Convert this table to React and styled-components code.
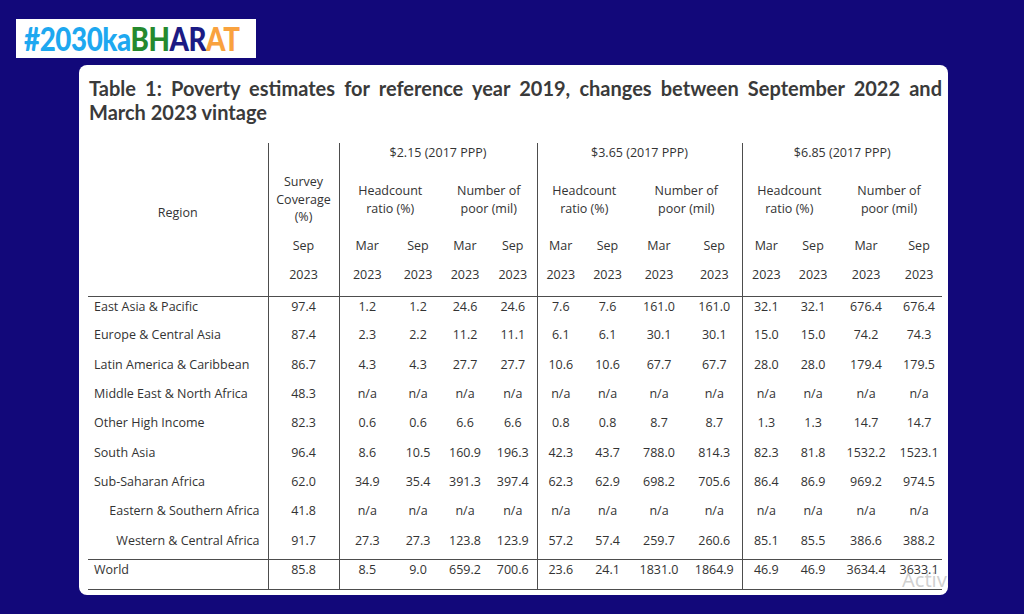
import React from "react";
import styled, { createGlobalStyle } from "styled-components";

const Global = createGlobalStyle`
  html, body { margin: 0; padding: 0; }
  body {
    background: #12087a;
    width: 1024px;
    height: 614px;
    overflow: hidden;
    font-family: "Open Sans", "Liberation Sans", sans-serif;
  }
`;

const Page = styled.div`
  display: flex;
  flex-direction: column;
  align-items: flex-start;
  padding: 19px 0 0 16px;
`;

const Logo = styled.div`
  background: #ffffff;
  width: 240px;
  height: 39px;
  display: flex;
  align-items: center;
  padding-left: 8px;
  box-sizing: border-box;
  overflow: hidden;
`;

const LogoText = styled.div`
  font-family: "Lato", "Liberation Sans", sans-serif;
  font-weight: 900;
  font-size: 33px;
  letter-spacing: -0.5px;
  line-height: 1;
  white-space: nowrap;
  transform: scaleX(0.84);
  transform-origin: left center;
`;

const LogoPart = styled.span`
  color: ${(p) => p.$c};
`;

const Card = styled.div`
  position: relative;
  margin: 7px 0 0 63px;
  width: 869px;
  height: 530px;
  background: #ffffff;
  border-radius: 8px;
  overflow: hidden;
  box-sizing: border-box;
  padding: 11px 6px 0 9px;
`;

const Title = styled.div`
  font-family: "Lato", "Liberation Sans", sans-serif;
  font-weight: 700;
  font-size: 20px;
  line-height: 24px;
  color: #3a3a3a;
  padding-left: 1px;
`;

const TitleLine = styled.div`
  text-align: justify;
  text-align-last: ${(p) => (p.$justify ? "justify" : "left")};
  white-space: nowrap;
`;

const Table = styled.table`
  margin-top: 19px;
  width: 854px;
  table-layout: fixed;
  border-collapse: collapse;
  font-size: 12.5px;
  color: #333333;
`;

const LINE = "1px solid #4d4d4d";

const Th = styled.td`
  box-sizing: border-box;
  padding: ${(p) => p.$pt || 0}px 0 0 0;
  vertical-align: top;
  text-align: center;
  line-height: 17.5px;
  font-weight: 400;
  height: ${(p) => p.$h || "auto"};
  border-right: ${(p) => (p.$rb ? LINE : "none")};
  border-bottom: ${(p) => (p.$bb ? LINE : "none")};
  white-space: nowrap;
`;

const Td = styled.td`
  box-sizing: border-box;
  height: 29.33px;
  padding: 0;
  vertical-align: top;
  line-height: 19px;
  text-align: ${(p) => (p.$region ? (p.$indent ? "right" : "left") : "center")};
  padding-left: ${(p) => (p.$region && !p.$indent ? "6px" : "0")};
  padding-right: ${(p) => (p.$indent ? "8px" : "0")};
  border-right: ${(p) => (p.$rb ? LINE : "none")};
  border-top: ${(p) => (p.$world ? LINE : "none")};
  border-bottom: ${(p) => (p.$world ? LINE : "none")};
  white-space: nowrap;
`;

const Watermark = styled.div`
  position: absolute;
  left: 823px;
  top: 503px;
  font-family: "Noto Sans", "Liberation Sans", sans-serif;
  font-size: 20px;
  line-height: 24px;
  color: rgba(170, 170, 170, 0.55);
  white-space: nowrap;
  pointer-events: none;
`;

const widths = [180, 71, 56, 46, 48, 48, 47, 47, 56, 55, 48, 46, 60, 46];
const borderCols = new Set([0, 1, 5, 9]);

const NA = Array(12).fill("n/a");
const rows = [
  { r: "East Asia & Pacific", v: ["97.4", "1.2", "1.2", "24.6", "24.6", "7.6", "7.6", "161.0", "161.0", "32.1", "32.1", "676.4", "676.4"] },
  { r: "Europe & Central Asia", v: ["87.4", "2.3", "2.2", "11.2", "11.1", "6.1", "6.1", "30.1", "30.1", "15.0", "15.0", "74.2", "74.3"] },
  { r: "Latin America & Caribbean", v: ["86.7", "4.3", "4.3", "27.7", "27.7", "10.6", "10.6", "67.7", "67.7", "28.0", "28.0", "179.4", "179.5"] },
  { r: "Middle East & North Africa", v: ["48.3", ...NA] },
  { r: "Other High Income", v: ["82.3", "0.6", "0.6", "6.6", "6.6", "0.8", "0.8", "8.7", "8.7", "1.3", "1.3", "14.7", "14.7"] },
  { r: "South Asia", v: ["96.4", "8.6", "10.5", "160.9", "196.3", "42.3", "43.7", "788.0", "814.3", "82.3", "81.8", "1532.2", "1523.1"] },
  { r: "Sub-Saharan Africa", v: ["62.0", "34.9", "35.4", "391.3", "397.4", "62.3", "62.9", "698.2", "705.6", "86.4", "86.9", "969.2", "974.5"] },
  { r: "Eastern & Southern Africa", indent: true, v: ["41.8", ...NA] },
  { r: "Western & Central Africa", indent: true, v: ["91.7", "27.3", "27.3", "123.8", "123.9", "57.2", "57.4", "259.7", "260.6", "85.1", "85.5", "386.6", "388.2"] },
  { r: "World", world: true, v: ["85.8", "8.5", "9.0", "659.2", "700.6", "23.6", "24.1", "1831.0", "1864.9", "46.9", "46.9", "3634.4", "3633.1"] },
];

const groups = ["$2.15 (2017 PPP)", "$3.65 (2017 PPP)", "$6.85 (2017 PPP)"];

export default function App() {
  return (
    <>
      <Global />
      <Page>
        <Logo>
          <LogoText>
            <LogoPart $c="#1ea8f0">#2030ka</LogoPart>
            <LogoPart $c="#25892e">BH</LogoPart>
            <LogoPart $c="#1b1b84">AR</LogoPart>
            <LogoPart $c="#f9a23e">AT</LogoPart>
          </LogoText>
        </Logo>
        <Card>
          <Title>
            <TitleLine $justify>
              Table 1: Poverty estimates for reference year 2019, changes between September 2022 and
            </TitleLine>
            <TitleLine>March 2023 vintage</TitleLine>
          </Title>
          <Table>
            <colgroup>
              {widths.map((w, i) => (
                <col key={i} style={{ width: w }} />
              ))}
            </colgroup>
            <tbody>
              <tr>
                <Th rowSpan={4} $rb $bb $pt={61}>Region</Th>
                <Th rowSpan={2} $rb $pt={30}>
                  Survey
                  <br />
                  Coverage
                  <br />
                  (%)
                </Th>
                {groups.map((g, i) => (
                  <Th key={g} colSpan={4} $rb={i < 2} $pt={1} $h="22px">
                    {g}
                  </Th>
                ))}
              </tr>
              <tr>
                {groups.map((g, i) => (
                  <React.Fragment key={g}>
                    <Th colSpan={2} $pt={17} $h="66px">
                      Headcount
                      <br />
                      ratio (%)
                    </Th>
                    <Th colSpan={2} $rb={i < 2} $pt={17}>
                      Number of
                      <br />
                      poor (mil)
                    </Th>
                  </React.Fragment>
                ))}
              </tr>
              <tr>
                <Th $rb $pt={6} $h="31px">Sep</Th>
                {Array.from({ length: 12 }).map((_, i) => (
                  <Th key={i} $rb={borderCols.has(i + 2)} $pt={6}>
                    {i % 2 === 0 ? "Mar" : "Sep"}
                  </Th>
                ))}
              </tr>
              <tr>
                {Array.from({ length: 13 }).map((_, i) => (
                  <Th key={i} $rb={borderCols.has(i + 1)} $bb $pt={4} $h="34px">
                    2023
                  </Th>
                ))}
              </tr>
              {rows.map((row) => (
                <tr key={row.r}>
                  <Td $region $indent={row.indent} $world={row.world} $rb>
                    {row.r}
                  </Td>
                  {row.v.map((val, i) => (
                    <Td key={i} $world={row.world} $rb={borderCols.has(i + 1)}>
                      {val}
                    </Td>
                  ))}
                </tr>
              ))}
            </tbody>
          </Table>
          <Watermark>
            Activate Windows
            <br />
            Go to Settings to activate Windows.
          </Watermark>
        </Card>
      </Page>
    </>
  );
}
